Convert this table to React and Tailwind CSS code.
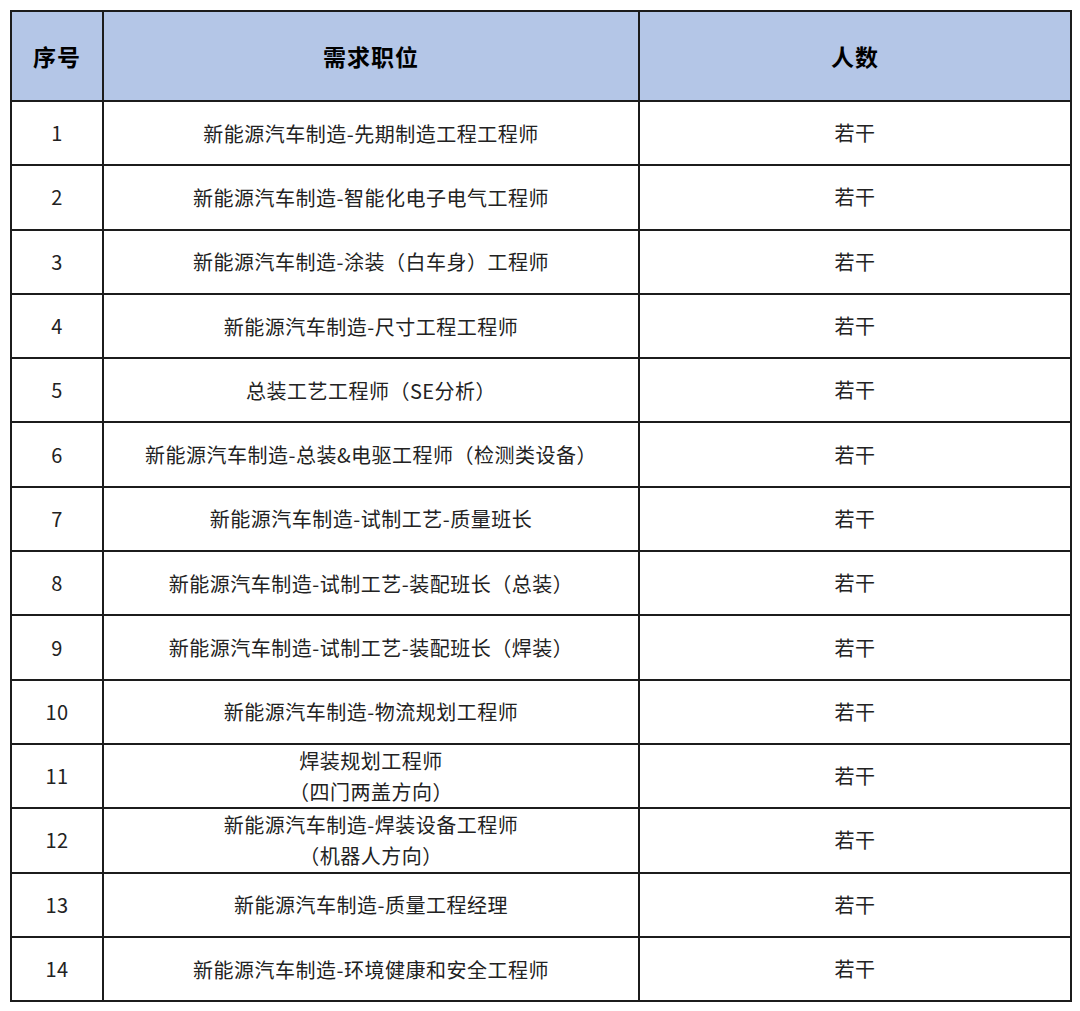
const rows = [
  ["新能源汽车制造-先期制造工程工程师"],
  ["新能源汽车制造-智能化电子电气工程师"],
  ["新能源汽车制造-涂装（白车身）工程师"],
  ["新能源汽车制造-尺寸工程工程师"],
  ["总装工艺工程师（SE分析）"],
  ["新能源汽车制造-总装&电驱工程师（检测类设备）"],
  ["新能源汽车制造-试制工艺-质量班长"],
  ["新能源汽车制造-试制工艺-装配班长（总装）"],
  ["新能源汽车制造-试制工艺-装配班长（焊装）"],
  ["新能源汽车制造-物流规划工程师"],
  ["焊装规划工程师", "（四门两盖方向）"],
  ["新能源汽车制造-焊装设备工程师", "（机器人方向）"],
  ["新能源汽车制造-质量工程经理"],
  ["新能源汽车制造-环境健康和安全工程师"],
];

export default function App() {
  return (
    <div
      className="min-h-[1011px] bg-white pl-[10px] pt-[10px]"
      style={{ fontFamily: '"Noto Sans CJK SC", "Noto Sans", sans-serif' }}
    >
      <table className="table-fixed border-collapse w-[1060px] text-[#222]">
        <colgroup>
          <col className="w-[92px]" />
          <col className="w-[536px]" />
          <col className="w-[432px]" />
        </colgroup>
        <thead>
          <tr className="h-[90px] bg-[#b4c6e7]">
            <th className="p-0 border-2 border-[#1c1c1c] text-[23px] font-bold text-black tracking-[1px]">序号</th>
            <th className="p-0 border-2 border-[#1c1c1c] text-[23px] font-bold text-black tracking-[1px]">需求职位</th>
            <th className="p-0 border-2 border-[#1c1c1c] text-[23px] font-bold text-black tracking-[1px]">人数</th>
          </tr>
        </thead>
        <tbody>
          {rows.map((lines, i) => (
            <tr key={i} className="h-[64.3px]">
              <td className="p-0 border-2 border-[#1c1c1c] text-center text-[20px] tracking-[0.5px]">{i + 1}</td>
              <td className="p-0 border-2 border-[#1c1c1c] text-center text-[20px] leading-[31px] tracking-[0.5px]">
                {lines.map((l, j) => (
                  <div key={j}>{l}</div>
                ))}
              </td>
              <td className="p-0 border-2 border-[#1c1c1c] text-center text-[20px] tracking-[0.5px]">若干</td>
            </tr>
          ))}
        </tbody>
      </table>
    </div>
  );
}
